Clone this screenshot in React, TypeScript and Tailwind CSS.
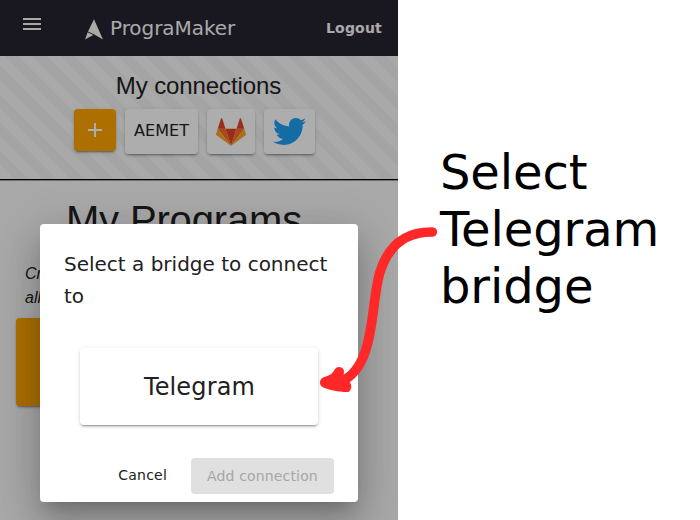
import React from "react";

const sans = "font-['DejaVu_Sans',sans-serif]";
const cardShadow =
  "shadow-[0_3px_1px_-2px_rgba(0,0,0,0.2),0_2px_2px_0_rgba(0,0,0,0.14),0_1px_5px_0_rgba(0,0,0,0.12)]";

function Logo() {
  return (
    <svg className="mt-[3px] h-[21px] w-[18px]" viewBox="0 0 54 62">
      <path fill="#fafafa" d="M27 0 54 61 28 46 9 37Z" />
      <path fill="#fafafa" d="M8 39 25 47.5 0 61Z" />
    </svg>
  );
}

function GitLabIcon() {
  return (
    <svg className="h-7 w-[30px]" viewBox="0 0 210 194">
      <path fill="#e24329" d="m105.06 193.66 38.64-118.92H66.42z" />
      <path fill="#fc6d26" d="M105.06 193.66 66.42 74.73H12.27z" />
      <path fill="#fca326" d="M12.27 74.73.53 110.87a8 8 0 0 0 2.9 8.95l101.63 73.84z" />
      <path fill="#e24329" d="M12.27 74.73h54.15L43.15 3.11c-1.2-3.69-6.41-3.69-7.61 0z" />
      <path fill="#fc6d26" d="M105.06 193.66 143.7 74.73h54.15z" />
      <path fill="#fca326" d="m197.85 74.73 11.74 36.14a8 8 0 0 1-2.9 8.95l-101.63 73.84z" />
      <path fill="#e24329" d="M197.85 74.73H143.7l23.27-71.62c1.2-3.69 6.41-3.69 7.61 0z" />
    </svg>
  );
}

function TwitterIcon() {
  return (
    <svg className="h-[27px] w-[33px]" viewBox="0 2.246 24 19.51">
      <path
        fill="#1da1f2"
        d="M23.954 4.569c-.885.389-1.83.654-2.825.775 1.014-.611 1.794-1.574 2.163-2.723-.951.555-2.005.959-3.127 1.184-.896-.959-2.173-1.559-3.591-1.559-2.717 0-4.92 2.203-4.92 4.917 0 .39.045.765.127 1.124C7.691 8.094 4.066 6.13 1.64 3.161c-.427.722-.666 1.561-.666 2.475 0 1.71.87 3.213 2.188 4.096-.807-.026-1.566-.248-2.228-.616v.061c0 2.385 1.693 4.374 3.946 4.827-.413.111-.849.171-1.296.171-.314 0-.615-.03-.916-.086.631 1.953 2.445 3.377 4.604 3.417-1.68 1.319-3.809 2.105-6.102 2.105-.39 0-.779-.023-1.17-.067 2.189 1.394 4.768 2.209 7.557 2.209 9.054 0 13.999-7.496 13.999-13.986 0-.209 0-.42-.015-.63.961-.689 1.8-1.56 2.46-2.548l-.047-.02z"
      />
    </svg>
  );
}

function Header() {
  return (
    <header className={`flex h-14 items-center bg-[#262230] px-4 text-[#fafafa] ${sans}`}>
      <svg className="mb-2 ml-[7px] h-3 w-[18px]" viewBox="0 0 18 12" fill="#fafafa">
        <path d="M0 0h18v2H0zM0 5h18v2H0zM0 10h18v2H0z" />
      </svg>
      <div className="ml-11 flex items-center gap-[7px]">
        <Logo />
        <span className="text-xl leading-7 tracking-[-0.06px]">PrograMaker</span>
      </div>
      <span className="ml-auto text-sm font-bold tracking-[0.2px]">Logout</span>
    </header>
  );
}

function Connections() {
  return (
    <section className="flex h-[124px] flex-col items-center border-b border-black bg-[repeating-linear-gradient(45deg,#fafafa_0px,#fafafa_10px,#f2f2f2_10px,#f2f2f2_20px)] pt-[14px] shadow-[0_1px_0_rgba(0,0,0,0.35)]">
      <h2 className="pr-px text-2xl leading-8 tracking-[-0.1px]">My connections</h2>
      <div className="mt-[7px] flex w-full items-start gap-[9px] pl-[74px]">
        <button className={`flex h-[42px] w-[42px] items-center justify-center rounded bg-[#ffa500] ${cardShadow}`}>
          <svg className="h-[14px] w-[14px]" viewBox="0 0 14 14" fill="#fff">
            <path d="M6 0h2v6h6v2H8v6H6V8H0V6h6z" />
          </svg>
        </button>
        <div className={`flex h-[45px] w-[73px] items-center justify-center rounded bg-white pb-0.5 text-base tracking-[0.1px] ${sans} ${cardShadow}`}>
          AEMET
        </div>
        <div className={`flex h-[45px] w-12 items-center justify-center rounded bg-white ${cardShadow}`}>
          <GitLabIcon />
        </div>
        <div className={`flex h-[45px] w-[51px] items-center justify-center rounded bg-white ${cardShadow}`}>
          <TwitterIcon />
        </div>
      </div>
    </section>
  );
}

function Dialog() {
  return (
    <div
      className={`absolute left-10 top-[224px] flex h-[278px] w-[318px] flex-col rounded bg-white p-6 pb-2 text-[#212121] shadow-[0_11px_15px_-7px_rgba(0,0,0,0.2),0_24px_38px_3px_rgba(0,0,0,0.14),0_9px_46px_8px_rgba(0,0,0,0.12)] ${sans}`}
    >
      <h1 className="text-xl leading-8">Select a bridge to connect to</h1>
      <div className={`mx-4 mt-9 flex h-[77px] shrink-0 items-center justify-center rounded pl-px text-2xl tracking-[0.15px] ${cardShadow}`}>
        Telegram
      </div>
      <div className="mt-auto flex items-center justify-end gap-2 text-sm">
        <button className="px-4 pb-0.5 tracking-[0.2px]">Cancel</button>
        <button className="h-9 w-[143px] rounded bg-[#e0e0e0] tracking-[0.15px] text-[#a6a6a6]">
          Add connection
        </button>
      </div>
    </div>
  );
}

function Arrow() {
  return (
    <svg className="absolute left-[310px] top-[215px] h-[185px] w-[140px]" viewBox="0 0 420 555">
      <path
        d="M367 51C283 50 235 94 211 168C180 260 200 456 92 500"
        fill="none"
        stroke="#ff2828"
        strokeWidth="29"
        strokeLinecap="round"
      />
      <path
        fill="#ff2828"
        d="M30 503C29 489 43 486 54 482C66 478 70 470 75 462C81 453 97 454 101 464C103 470 101 477 101 485L117 499C126 507 126 523 117 530C107 533 76 529 53 522C40 518 30 514 30 503Z"
      />
    </svg>
  );
}

export default function App() {
  return (
    <div className="relative flex h-[520px] w-[700px] overflow-hidden bg-white">
      <main className="relative h-full w-[398px] overflow-hidden bg-[#fafafa] font-['Liberation_Sans',sans-serif] text-[#212121]">
        <Header />
        <Connections />
        <h1 className="mt-4 pr-[30px] text-center text-[40px] leading-[48px] tracking-[-0.15px]">My Programs</h1>
        <p className="ml-[25px] mt-[18px] text-base italic leading-6">
          Cr
          <br />
          all
        </p>
        <div className={`ml-4 mt-2 h-[88px] w-[170px] rounded bg-[#ffa500] ${cardShadow}`} />
        <div className="absolute inset-0 bg-black/32" />
        <Dialog />
      </main>
      <p className={`ml-[42px] mt-[144px] text-[48px] leading-[57px] tracking-[-0.1px] text-black ${sans}`}>
        Select
        <br />
        Telegram
        <br />
        bridge
      </p>
      <Arrow />
    </div>
  );
}
